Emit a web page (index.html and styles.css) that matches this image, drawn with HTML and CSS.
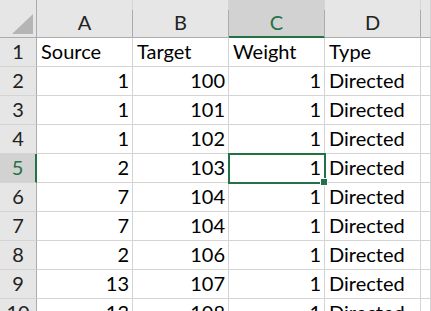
FILE: index.html
```html
<!DOCTYPE html>
<html lang="en">
<head>
  <meta charset="UTF-8" />
  <title>Sheet</title>
  <link rel="stylesheet" href="styles.css">
</head>
<body>
  <div class="sheet">
    <div class="hd corner"><span class="corner__tri"></span></div>
    <div class="hd col">A</div>
    <div class="hd col">B</div>
    <div class="hd col col--active">C</div>
    <div class="hd col">D</div>
    <div class="hd col col--rest"></div>

    <div class="hd row">1</div>
    <div class="cell">Source</div>
    <div class="cell">Target</div>
    <div class="cell">Weight</div>
    <div class="cell">Type</div>
    <div class="cell"></div>

    <div class="hd row">2</div>
    <div class="cell num">1</div>
    <div class="cell num">100</div>
    <div class="cell num">1</div>
    <div class="cell">Directed</div>
    <div class="cell"></div>

    <div class="hd row">3</div>
    <div class="cell num">1</div>
    <div class="cell num">101</div>
    <div class="cell num">1</div>
    <div class="cell">Directed</div>
    <div class="cell"></div>

    <div class="hd row">4</div>
    <div class="cell num">1</div>
    <div class="cell num">102</div>
    <div class="cell num">1</div>
    <div class="cell">Directed</div>
    <div class="cell"></div>

    <div class="hd row row--active">5</div>
    <div class="cell num">2</div>
    <div class="cell num">103</div>
    <div class="cell num cell--sel">1<span class="handle"></span></div>
    <div class="cell">Directed</div>
    <div class="cell"></div>

    <div class="hd row">6</div>
    <div class="cell num">7</div>
    <div class="cell num">104</div>
    <div class="cell num">1</div>
    <div class="cell">Directed</div>
    <div class="cell"></div>

    <div class="hd row">7</div>
    <div class="cell num">7</div>
    <div class="cell num">104</div>
    <div class="cell num">1</div>
    <div class="cell">Directed</div>
    <div class="cell"></div>

    <div class="hd row">8</div>
    <div class="cell num">2</div>
    <div class="cell num">106</div>
    <div class="cell num">1</div>
    <div class="cell">Directed</div>
    <div class="cell"></div>

    <div class="hd row">9</div>
    <div class="cell num">13</div>
    <div class="cell num">107</div>
    <div class="cell num">1</div>
    <div class="cell">Directed</div>
    <div class="cell"></div>

    <div class="hd row">10</div>
    <div class="cell num">13</div>
    <div class="cell num">108</div>
    <div class="cell num">1</div>
    <div class="cell">Directed</div>
    <div class="cell"></div>
  </div>
</body>
</html>
```

FILE: styles.css
```css
html, body {
  margin: 0;
  background: #fff;
  overflow: hidden;
}

.sheet {
  display: grid;
  grid-template-columns: 37px repeat(4, 96px) 1fr;
  grid-template-rows: 38px repeat(10, 29px);
  width: 431px;
  font-family: Lato, "Open Sans", sans-serif;
  font-size: 20px;
  line-height: 1;
  color: #000;
}

.hd {
  background: #e6e6e6;
  color: #222;
  display: flex;
  align-items: flex-end;
  justify-content: center;
  box-sizing: border-box;
}

.corner {
  position: relative;
  border-right: 1px solid #ababab;
  border-bottom: 1px solid #ababab;
}

.corner__tri {
  position: absolute;
  right: 3px;
  bottom: 3px;
  width: 21px;
  height: 20px;
  background: #b5b5b5;
  clip-path: polygon(100% 0, 100% 100%, 0 100%);
}

.col {
  padding-bottom: 5px;
  border-bottom: 1px solid #ababab;
  border-right: 1px solid #d4d4d4;
  position: relative;
}

.col::after {
  content: "";
  position: absolute;
  right: -1px;
  top: 10px;
  bottom: 0;
  width: 1px;
  background: #ababab;
}

.col--active {
  background: #d2d2d2;
  color: #217346;
  border-bottom: 2px solid #217346;
  padding-bottom: 4px;
}

.col--rest::after {
  display: none;
}

.row {
  padding-bottom: 5px;
  border-right: 1px solid #ababab;
  border-bottom: 1px solid #d4d4d4;
}

.row--active {
  background: #d2d2d2;
  color: #217346;
  border-right: 2px solid #217346;
}

.cell {
  display: flex;
  align-items: flex-end;
  padding: 0 4px 5px 4px;
  border-right: 1px solid #d4d4d4;
  border-bottom: 1px solid #d4d4d4;
  white-space: nowrap;
  overflow: hidden;
  box-sizing: border-box;
}

.num {
  justify-content: flex-end;
  padding-right: 3px;
}

.cell--sel {
  position: relative;
  overflow: visible;
  outline: 2px solid #217346;
  outline-offset: -1px;
  z-index: 1;
}

.handle {
  position: absolute;
  right: -4px;
  bottom: -4px;
  width: 6px;
  height: 6px;
  background: #217346;
  border: 1px solid #fff;
}
```
